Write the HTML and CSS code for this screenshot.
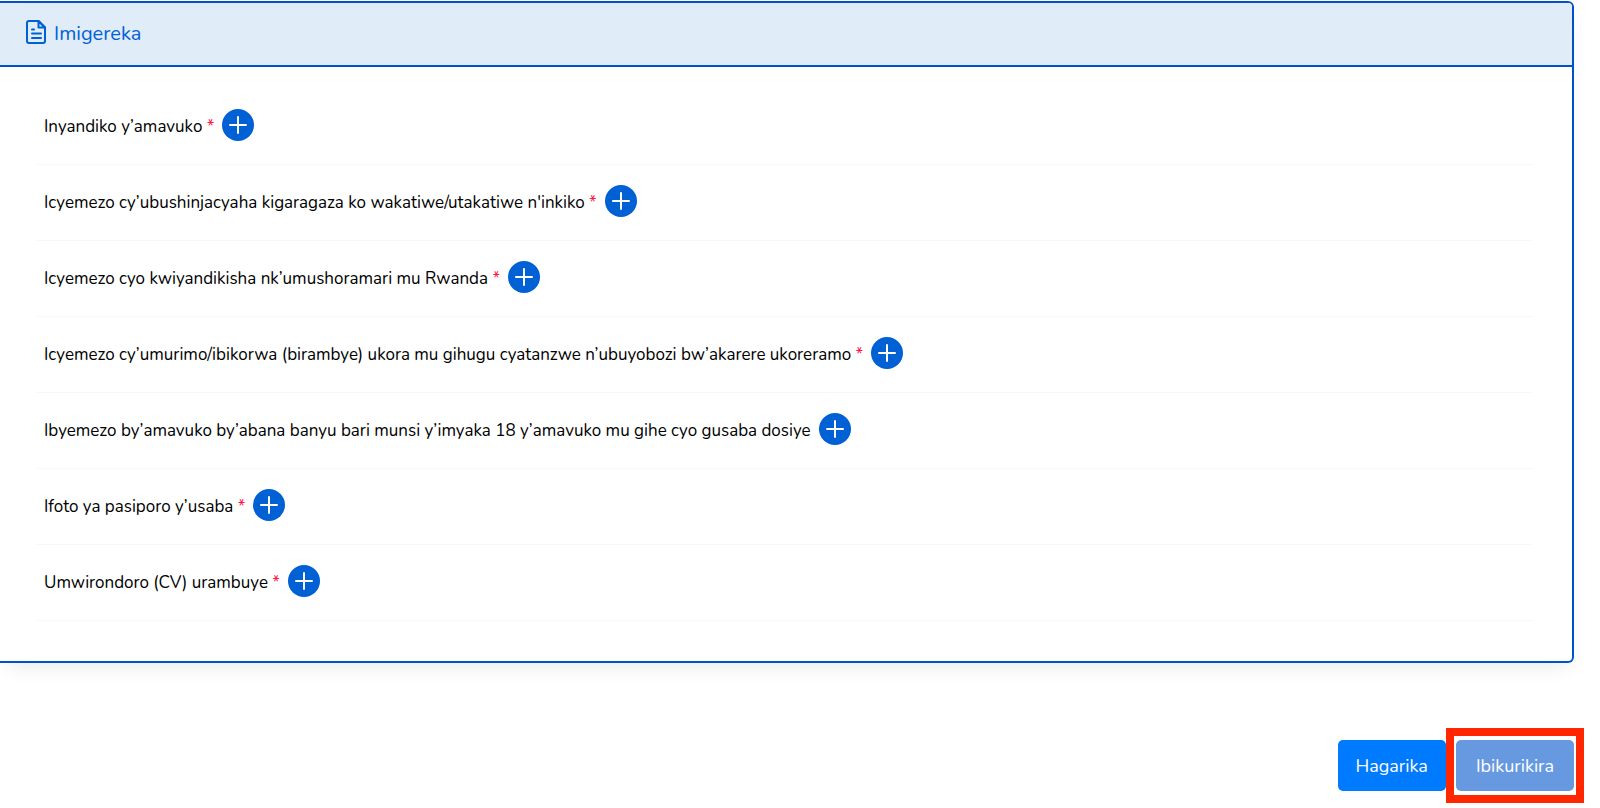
FILE: index.html
```
<!DOCTYPE html>
<html lang="rw">
<head>
    <meta charset="UTF-8">
    <meta name="viewport" content="width=device-width, initial-scale=1.0">
    <title>Imigereka</title>
    <link rel="stylesheet" href="styles.css">
</head>
<body>
    <!-- Plus sign shared by all the add buttons -->
    <svg class="sprite" aria-hidden="true">
        <symbol id="plus" viewBox="0 0 18 18">
            <path d="M9 1v16M1 9h16" fill="none" stroke="currentColor" stroke-width="2" stroke-linecap="round"/>
        </symbol>
    </svg>

    <section class="card">
        <div class="card-header">
            <svg class="icon-file" viewBox="0 0 20 24" aria-hidden="true">
                <path d="M3 1h9.500L19 7.500V21a2 2 0 0 1-2 2H3a2 2 0 0 1-2-2V3a2 2 0 0 1 2-2z"/>
                <path d="M12.500 1v6.500H19z"/>
                <path d="M6 9.500h2M6 13.500h9M6 18h9"/>
            </svg>
            <h1>Imigereka</h1>
        </div>
        <ul class="attachments">
            <li>
                <span class="name">Inyandiko y’amavuko <span class="required">*</span></span>
                <button type="button" class="add" aria-label="Inyandiko y’amavuko"><svg><use href="#plus"/></svg></button>
            </li>
            <li>
                <span class="name">Icyemezo cy’ubushinjacyaha kigaragaza ko wakatiwe/utakatiwe n'inkiko <span class="required">*</span></span>
                <button type="button" class="add" aria-label="Icyemezo cy’ubushinjacyaha"><svg><use href="#plus"/></svg></button>
            </li>
            <li>
                <span class="name">Icyemezo cyo kwiyandikisha nk’umushoramari mu Rwanda <span class="required">*</span></span>
                <button type="button" class="add" aria-label="Icyemezo cyo kwiyandikisha"><svg><use href="#plus"/></svg></button>
            </li>
            <li>
                <span class="name">Icyemezo cy’umurimo/ibikorwa (birambye) ukora mu gihugu cyatanzwe n’ubuyobozi bw’akarere ukoreramo <span class="required">*</span></span>
                <button type="button" class="add" aria-label="Icyemezo cy’umurimo/ibikorwa"><svg><use href="#plus"/></svg></button>
            </li>
            <li>
                <span class="name">Ibyemezo by’amavuko by’abana banyu bari munsi y’imyaka 18 y’amavuko mu gihe cyo gusaba dosiye</span>
                <button type="button" class="add" aria-label="Ibyemezo by’amavuko by’abana"><svg><use href="#plus"/></svg></button>
            </li>
            <li>
                <span class="name">Ifoto ya pasiporo y’usaba <span class="required">*</span></span>
                <button type="button" class="add" aria-label="Ifoto ya pasiporo"><svg><use href="#plus"/></svg></button>
            </li>
            <li>
                <span class="name">Umwirondoro (CV) urambuye <span class="required">*</span></span>
                <button type="button" class="add" aria-label="Umwirondoro (CV)"><svg><use href="#plus"/></svg></button>
            </li>
        </ul>
    </section>

    <div class="actions">
        <button type="button" class="btn btn-cancel">Hagarika</button>
        <div class="highlight">
            <button type="button" class="btn btn-next">Ibikurikira</button>
        </div>
    </div>
</body>
</html>
```
FILE: styles.css
```
* {
    box-sizing: border-box;
}

body {
    margin: 0;
    padding-top: 1px;
    background: #fff;
    color: #000;
    font-family: Nunito, Lato, sans-serif;
    font-size: 18px;
}

.sprite {
    display: none;
}

.card {
    margin-right: 26px;
    border: 2px solid #0052cc;
    border-left: none;
    border-radius: 0 6px 6px 0;
    box-shadow: 0 10px 20px -8px rgba(0, 0, 0, 0.1);
}

.card-header {
    display: flex;
    align-items: center;
    gap: 8px;
    height: 64px;
    padding: 0 26px 4px;
    border-bottom: 2px solid #0052cc;
    border-top-right-radius: 4px;
    background: #e0ecf8;
    color: #0061d5;
}

.card-header h1 {
    margin: 0;
    padding-top: 2px;
    font-size: 20px;
    font-weight: 400;
}

.icon-file {
    width: 20px;
    height: 24px;
    fill: none;
    stroke: currentColor;
    stroke-width: 2;
    stroke-linecap: round;
    stroke-linejoin: round;
}

.attachments {
    margin: 0;
    padding: 22px 39px 40px 36px;
    list-style: none;
}

.attachments li {
    display: flex;
    align-items: center;
    gap: 8px;
    height: 76px;
    padding: 0 8px 4px;
    border-bottom: 1px solid #f8f8f8;
    font-size: 17px;
}

.name {
    padding-top: 4px;
}

.required {
    color: #ff1744;
}

.add {
    display: flex;
    align-items: center;
    justify-content: center;
    flex: none;
    width: 32px;
    height: 32px;
    padding: 0;
    border: none;
    border-radius: 50%;
    background: #0061d5;
    color: #fff;
    cursor: pointer;
}

.add svg {
    width: 18px;
    height: 18px;
}

.actions {
    display: flex;
    justify-content: flex-end;
    align-items: center;
    margin-top: 65px;
    padding-right: 16px;
}

.btn {
    height: 51px;
    border: none;
    border-radius: 5px;
    color: #fff;
    font: inherit;
    cursor: pointer;
}

.btn-cancel {
    padding: 0 18px;
    background: #007bff;
}

.btn-next {
    padding: 0 20px;
    background: #6699e0;
}

.highlight {
    display: flex;
    padding: 4px 2px;
    border: 8px solid #ff2600;
}
```
